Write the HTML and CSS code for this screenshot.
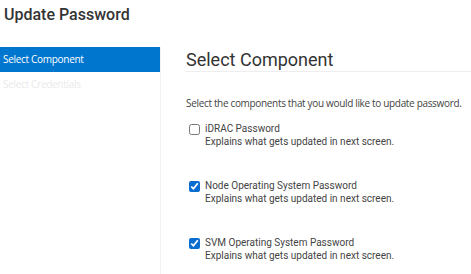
FILE: index.html
```html
<!DOCTYPE html>
<html lang="en">
<head>
    <meta charset="UTF-8">
    <title>Update Password</title>
    <link rel="stylesheet" href="styles.css">
</head>
<body>
    <h1 class="page-title">Update Password</h1>

    <div class="wizard">
        <nav class="steps">
            <div class="step active">Select Component</div>
            <div class="step">Select Credentials</div>
        </nav>

        <main class="content">
            <h2 class="section-title">Select Component</h2>
            <p class="intro">Select the components that you would like to update password.</p>

            <div class="options">
                <label class="option">
                    <input type="checkbox">
                    <span class="option-text">
                        <span class="option-name">iDRAC Password</span>
                        <span class="option-desc">Explains what gets updated in next screen.</span>
                    </span>
                </label>
                <label class="option">
                    <input type="checkbox" checked>
                    <span class="option-text">
                        <span class="option-name">Node Operating System Password</span>
                        <span class="option-desc">Explains what gets updated in next screen.</span>
                    </span>
                </label>
                <label class="option">
                    <input type="checkbox" checked>
                    <span class="option-text">
                        <span class="option-name">SVM Operating System Password</span>
                        <span class="option-desc">Explains what gets updated in next screen.</span>
                    </span>
                </label>
            </div>
        </main>
    </div>
</body>
</html>
```

FILE: styles.css
```css
* {
    margin: 0;
    padding: 0;
    box-sizing: border-box;
}

body {
    font-family: Roboto, "Liberation Sans", sans-serif;
    color: #333;
    background: #fff;
    height: 274px;
    overflow: hidden;
}

.page-title {
    font-size: 16px;
    font-weight: 500;
    color: #333;
    padding: 5px 0 0 4px;
    height: 47px;
}

.wizard {
    display: flex;
    height: 227px;
}

.steps {
    width: 161px;
    border-right: 1px solid #f2f2f2;
    font-family: "Open Sans", sans-serif;
    font-size: 10px;
    letter-spacing: -0.3px;
}

.step {
    height: 25px;
    line-height: 25px;
    padding-left: 3px;
    color: #eaeaea;
}

.step.active {
    background: #0076ce;
    color: #fff;
}

.content {
    flex: 1;
    padding-left: 25px;
}

.section-title {
    font-size: 18px;
    font-weight: 400;
    color: #333;
    height: 25px;
    line-height: 25px;
    border-bottom: 1px solid #eee;
}

.intro {
    font-family: "Open Sans", sans-serif;
    font-size: 10px;
    letter-spacing: -0.33px;
    color: #444;
    margin-top: 24px;
    white-space: nowrap;
}

.options {
    display: flex;
    flex-direction: column;
    gap: 31px;
    margin-top: 12px;
    padding-left: 3px;
}

.option {
    display: flex;
    gap: 5px;
    font-size: 10px;
    color: #444;
}

.option input {
    width: 11px;
    height: 11px;
    margin-top: 2px;
    accent-color: #0a6ed1;
}

.option-text {
    display: flex;
    flex-direction: column;
    line-height: 13px;
}
```
